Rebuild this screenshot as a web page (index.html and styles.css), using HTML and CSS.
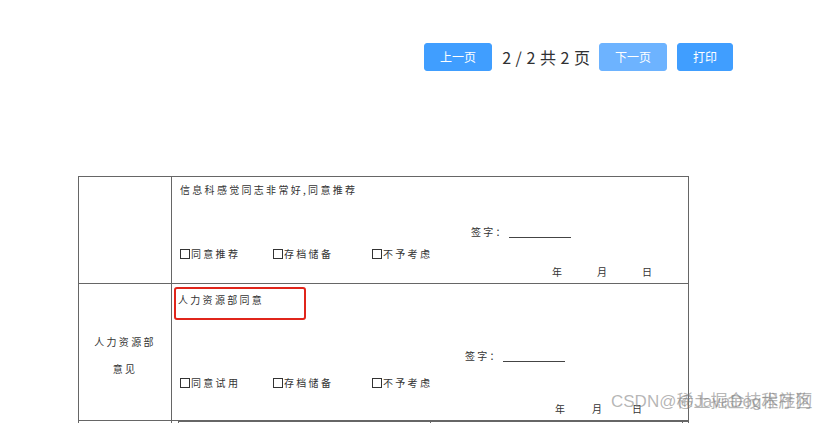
FILE: index.html
```html
<!DOCTYPE html>
<html lang="zh-CN">
<head>
<meta charset="UTF-8">
<meta name="viewport" content="width=device-width, initial-scale=1.0">
<title>打印预览</title>
<link rel="stylesheet" href="styles.css">
</head>
<body>
    <div class="toolbar">
        <button class="btn">上一页</button>
        <span class="pager">2 / 2 共 2 页</span>
        <button class="btn btn-disabled">下一页</button>
        <button class="btn">打印</button>
    </div>

    <table class="form-table">
        <tr class="row-dept">
            <td class="label-cell"></td>
            <td class="opinion-cell">
                <div class="opinion">
                    <div class="line first-line">信息科感觉同志非常好,同意推荐</div>
                    <div class="line sign sign-dept">签字：<span class="sign-blank"></span></div>
                    <div class="line checks checks-dept">
                        <span class="check check-a"><i class="box"></i>同意推荐</span>
                        <span class="check check-b"><i class="box"></i>存档储备</span>
                        <span class="check"><i class="box"></i>不予考虑</span>
                    </div>
                    <div class="line date date-dept"><span>年</span><span>月</span><span>日</span></div>
                </div>
            </td>
        </tr>
        <tr class="row-hr">
            <td class="label-cell label-hr">人力资源部<br>意见</td>
            <td class="opinion-cell">
                <div class="opinion">
                    <div class="highlight">人力资源部同意</div>
                    <div class="line sign sign-hr">签字：<span class="sign-blank"></span></div>
                    <div class="line checks checks-hr">
                        <span class="check check-a"><i class="box"></i>同意试用</span>
                        <span class="check check-b"><i class="box"></i>存档储备</span>
                        <span class="check"><i class="box"></i>不予考虑</span>
                    </div>
                    <div class="line date date-hr"><span>年</span><span>月</span><span>日</span></div>
                </div>
            </td>
        </tr>
        <tr class="row-next">
            <td class="label-cell"></td>
            <td class="opinion-cell">
                <div class="inner-box">
                    <div class="inner-half"></div>
                    <div class="inner-half"></div>
                </div>
            </td>
        </tr>
    </table>

    <div class="watermark">
        <span class="wm-main">CSDN@稀土掘金技术社区</span>
        <span class="wm-over">@JavaDog程序狗</span>
    </div>
</body>
</html>
```

FILE: styles.css
```css
html, body {
    height: 423px;
    overflow: hidden;
}
body {
    margin: 0;
    padding: 0;
    background-color: #fff;
    font-family: "Noto Sans CJK SC", "Noto Sans", sans-serif;
}
.toolbar {
    display: flex;
    justify-content: flex-end;
    align-items: center;
    padding: 43px 96px 0 0;
}
.btn {
    height: 28px;
    padding: 0 15px;
    border: 1px solid #409eff;
    border-radius: 3px;
    background-color: #409eff;
    color: #fff;
    font-family: inherit;
    font-size: 12px;
    line-height: 26px;
    margin-left: 10px;
}
.btn-disabled {
    background-color: #6db3ff;
    border-color: #6db3ff;
}
.pager {
    font-size: 16px;
    color: #303133;
    margin: 0 -1px 0 10px;
    line-height: 28px;
    word-spacing: 1px;
}
.form-table {
    margin: 105px 0 0 78px;
    width: 611px;
    border-collapse: collapse;
    font-size: 10px;
    letter-spacing: 2.3px;
    color: #333;
}
.form-table td {
    border: 1px solid #666;
    padding: 0;
    vertical-align: top;
}
.label-cell {
    width: 92px;
}
.label-hr {
    text-align: center;
    line-height: 27px;
    padding-top: 44px !important;
}
.opinion {
    padding: 0 8px;
}
.line {
    height: 14px;
    line-height: 14px;
    white-space: nowrap;
}
.row-dept .opinion {
    height: 106px;
    padding-top: 6px;
    box-sizing: border-box;
}
.row-hr .opinion {
    height: 136px;
    padding-top: 3px;
    box-sizing: border-box;
}
.sign {
    display: flex;
    align-items: center;
}
.sign-dept {
    margin: 28px 0 0 291px;
}
.sign-hr {
    margin: 29px 0 0 285px;
}
.sign-blank {
    display: inline-block;
    width: 62px;
    height: 10px;
    border-bottom: 1px solid #444;
    margin-left: 1px;
}
.checks {
    display: flex;
}
.checks-dept {
    margin-top: 8px;
}
.checks-hr {
    margin-top: 13px;
}
.check {
    display: flex;
    align-items: center;
}
.check-a {
    width: 93px;
}
.check-b {
    width: 99px;
}
.box {
    display: inline-block;
    width: 8px;
    height: 8px;
    border: 1px solid #333;
    margin-right: 1px;
}
.date {
    display: flex;
}
.date span {
    width: 10px;
}
.date-dept {
    margin: 4px 0 0 372px;
}
.date-dept span + span {
    margin-left: 35px;
}
.date-hr {
    margin: 12px 0 0 375px;
}
.date-hr span:nth-child(2) {
    margin-left: 27px;
}
.date-hr span:nth-child(3) {
    margin-left: 30px;
}
.highlight {
    width: 126px;
    height: 25px;
    margin-left: -6px;
    padding: 4px 0 0 2px;
    border: 2px solid #e0251b;
    border-radius: 3px;
    line-height: 14px;
    white-space: nowrap;
}
.row-next td {
    height: 10px;
}
.inner-box {
    display: flex;
    margin: 0 0 0 6px;
    height: 10px;
    border: 1px solid #666;
    border-right: none;
}
.inner-half {
    width: 251px;
    border-right: 1px solid #666;
}
.watermark {
    position: absolute;
    left: 611px;
    top: 390px;
    font-family: "Liberation Sans", "Noto Sans CJK SC", sans-serif;
    font-size: 17px;
    line-height: 24px;
    color: rgba(120, 120, 120, 0.55);
    white-space: nowrap;
}
.wm-over {
    position: absolute;
    left: 66px;
    top: 0;
}
```
